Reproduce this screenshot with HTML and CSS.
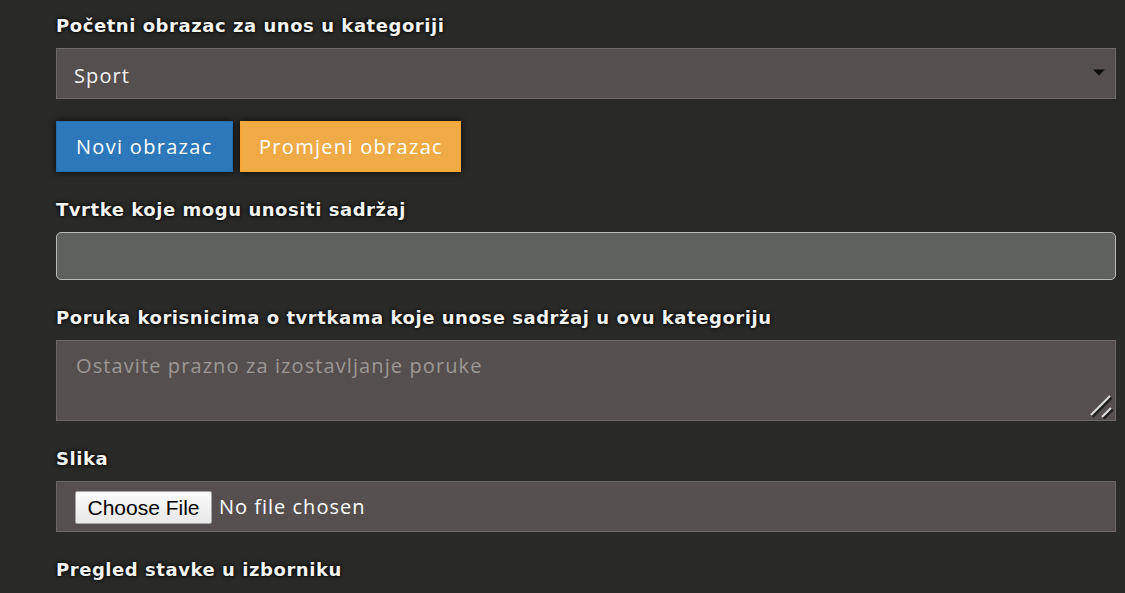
FILE: index.html
```html
<!DOCTYPE html>
<html lang="hr">
<head>
<meta charset="utf-8">
<link rel="stylesheet" href="styles.css">
</head>
<body>
<main class="form">
  <div class="field">
    <label class="lbl">Početni obrazac za unos u kategoriji</label>
    <div class="select">
      <span class="select-val">Sport</span>
      <svg class="caret" width="12" height="7" viewBox="0 0 12 7"><path d="M0 0.5H12L6 6.5Z" fill="#0d0d0d"/></svg>
    </div>
  </div>
  <div class="btns">
    <button class="btn btn-blue">Novi obrazac</button>
    <button class="btn btn-orange">Promjeni obrazac</button>
  </div>
  <div class="field">
    <label class="lbl">Tvrtke koje mogu unositi sadržaj</label>
    <div class="input"></div>
  </div>
  <div class="field">
    <label class="lbl">Poruka korisnicima o tvrtkama koje unose sadržaj u ovu kategoriju</label>
    <div class="textarea">
      <span class="ph">Ostavite prazno za izostavljanje poruke</span>
      <svg class="grip" width="26" height="26" viewBox="0 0 26 26">
        <path d="M4.5 23.5L23.5 4.5" stroke="#1e1e1e" stroke-width="3"/>
        <path d="M3 22L22 3" stroke="#dcdcdc" stroke-width="2.2"/>
        <path d="M15.5 25.5L24.5 16.5" stroke="#1e1e1e" stroke-width="3"/>
        <path d="M14 24L23 15" stroke="#dcdcdc" stroke-width="2.2"/>
      </svg>
    </div>
  </div>
  <div class="field">
    <label class="lbl">Slika</label>
    <div class="file">
      <span class="file-btn">Choose File</span>
      <span class="file-txt">No file chosen</span>
    </div>
  </div>
  <div class="field">
    <label class="lbl">Pregled stavke u izborniku</label>
  </div>
</main>
</body>
</html>
```
FILE: styles.css
```css
html, body { margin: 0; padding: 0; }
body {
  background: #292a27;
  font-family: "Open Sans", "Liberation Sans", sans-serif;
  width: 1125px;
  height: 593px;
  overflow: hidden;
}
.form {
  width: 1060px;
  padding: 14px 0 0 56px;
  display: flex;
  flex-direction: column;
}
.field { display: flex; flex-direction: column; }
.field + .field, .btns + .field { margin-top: 26px; }
.lbl {
  color: #f4f4f2;
  font-family: "DejaVu Sans", "Open Sans", sans-serif;
  font-weight: 700;
  font-size: 18px;
  line-height: 24px;
  letter-spacing: 0.55px;
  text-shadow: 0 0 4px #000, 0 0 2px rgba(0,0,0,.8);
  margin-bottom: 10px;
}
.select {
  height: 51px;
  box-sizing: border-box;
  background: #554f4f;
  border: 1px solid #6e6b69;
  display: flex;
  align-items: center;
  justify-content: space-between;
  padding: 3px 10px 0 17px;
  color: #f2f2f2;
  font-size: 20px;
  letter-spacing: 1.1px;
}
.caret { margin-top: -6px; }
.btns {
  display: flex;
  gap: 7px;
  margin-top: 22px;
}
.btn {
  height: 51px;
  box-sizing: border-box;
  font-family: inherit;
  font-size: 20px;
  letter-spacing: 1.3px;
  color: #fff;
  padding: 0 0 0 19px;
  text-align: left;
  border-radius: 0;
  cursor: pointer;
  box-shadow: 0 0 7px rgba(0,0,0,.75);
}
.btn-blue {
  width: 177px;
  background: #2c78ba;
  border: 1px solid #276eae;
}
.btn-orange {
  width: 221px;
  background: #f0ab47;
  border: 2px solid #f7a637;
  padding-left: 17px;
}
.input {
  height: 48px;
  box-sizing: border-box;
  background: #5f615d;
  border: 1px solid #b9bab4;
  border-radius: 5px;
}
.textarea {
  position: relative;
  height: 81px;
  box-sizing: border-box;
  background: #554f4f;
  border: 1px solid #6a6766;
  padding: 13px 19px;
  line-height: 24px;
}
.ph { color: #9c9896; font-size: 20px; letter-spacing: 1.1px; }
.grip { position: absolute; right: 1px; bottom: 1px; }
.file {
  height: 51px;
  box-sizing: border-box;
  background: #554f4f;
  border: 1px solid #6a6766;
  display: flex;
  align-items: center;
  padding-left: 18px;
  gap: 7px;
}
.file-btn {
  font-family: "Liberation Sans", Arial, sans-serif;
  font-size: 21px;
  color: #000;
  background: linear-gradient(#fbfbfb, #e8e8e8);
  border: 1px solid #a6a6a6;
  border-radius: 2px;
  width: 137px;
  height: 33px;
  box-sizing: border-box;
  line-height: 31px;
  text-align: center;
  margin-top: 1px;
}
.file-txt {
  font-size: 20px;
  letter-spacing: 1px;
  color: #fff;
}
```
